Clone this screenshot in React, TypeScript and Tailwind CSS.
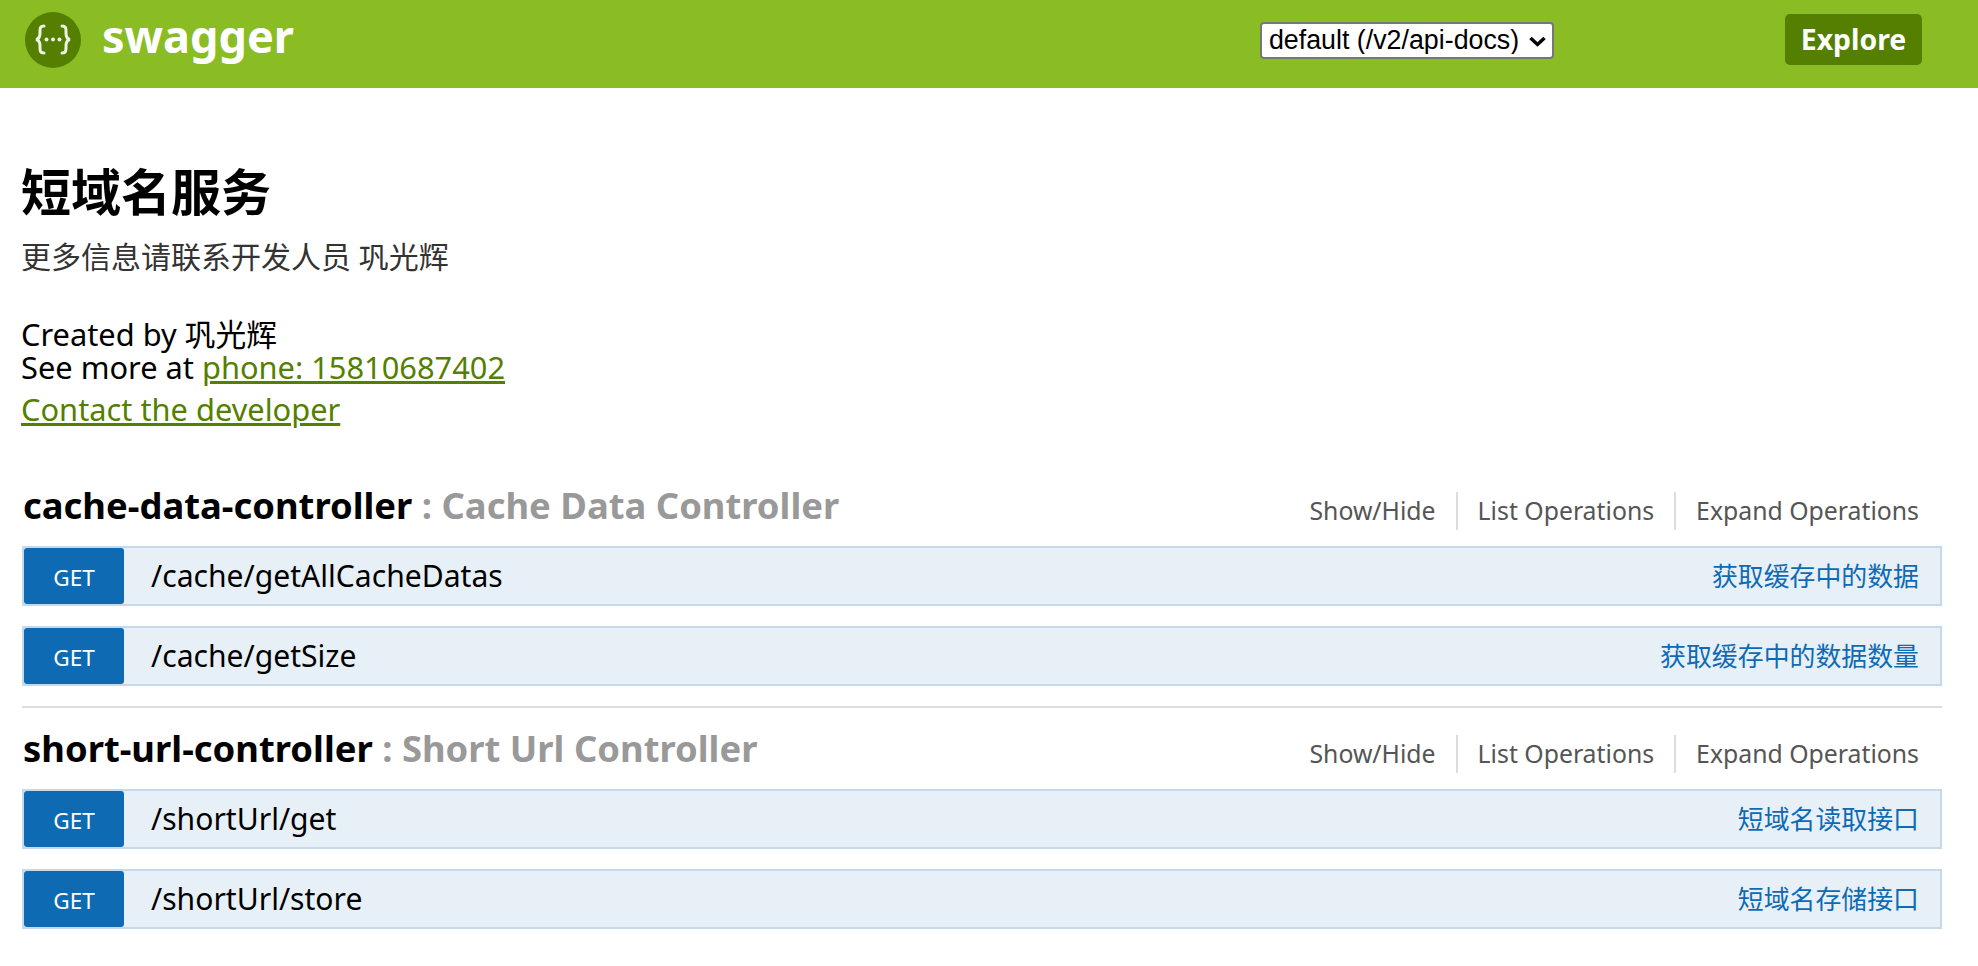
const F = '"Noto Sans", "Noto Sans CJK SC", sans-serif';

function Row({ path, desc }: { path: string; desc: string }) {
  return (
    <div className="flex h-[60px] items-center border-2 border-[#c3d9ec] bg-[#e7f0f7] pr-[21px]">
      <div className="flex h-[56px] w-[100px] items-center justify-center rounded-[3px] bg-[#0f6ab4] pt-1 text-[22.6px] text-white">GET</div>
      <div className="ml-[27px] flex-1 text-[30.1px] text-black">{path}</div>
      <div className="text-[25.9px] text-[#0f6ab4]">{desc}</div>
    </div>
  );
}

function Section({ name, label, rows, divider }: { name: string; label: string; rows: [string, string][]; divider?: boolean }) {
  return (
    <section className={divider ? "mb-[19px] border-b-2 border-[#ddd] pb-[20px]" : ""}>
      <div className="flex h-[62px] items-start justify-between pl-px pr-[23px]">
        <h2 className="text-[36.4px] leading-[42px] font-bold text-black">
          {name} <span className="text-[#999]">: {label}</span>
        </h2>
        <div className="mt-[11px] flex h-[32px] items-center text-[24.8px] text-[#555]">
          <span className="border-r-2 border-[#ddd] pr-[20px]">Show/Hide</span>
          <span className="border-r-2 border-[#ddd] px-[20px]">List Operations</span>
          <span className="pl-[20px]">Expand Operations</span>
        </div>
      </div>
      <div className="flex flex-col gap-[20px]">
        {rows.map(([p, d]) => (
          <Row key={p} path={p} desc={d} />
        ))}
      </div>
    </section>
  );
}

function Logo() {
  return (
    <svg className="mt-[12px] h-[56px] w-[56px] shrink-0" viewBox="0 0 56 56" fill="none">
      <circle cx="28" cy="28" r="28" fill="#547f00" />
      <g stroke="#eef3e4" strokeWidth="3" strokeLinecap="round">
        <path d="M19 14 C14.5 14 15 17 15 21 C15 25 14 27 11 27.5 C14 28 15 30 15 34 C15 38 14.5 41 19 41" />
        <path d="M37 14 C41.5 14 41 17 41 21 C41 25 42 27 45 27.5 C42 28 41 30 41 34 C41 38 41.5 41 37 41" />
      </g>
      <circle cx="21.5" cy="27.5" r="2" fill="#eef3e4" />
      <circle cx="28" cy="27.5" r="2" fill="#eef3e4" />
      <circle cx="34.5" cy="27.5" r="2" fill="#eef3e4" />
    </svg>
  );
}

export default function App() {
  return (
    <div className="min-h-[966px] bg-white" style={{ fontFamily: F }}>
      <header className="flex h-[88px] items-start bg-[#8abd24] pl-[25px] pr-[56px]">
        <Logo />
        <div className="mt-[13px] ml-[21px] text-[45px] leading-none font-bold text-white">swagger</div>
        <div className="relative mt-[22px] ml-[966px] h-[37px] w-[294px]">
          <select className="h-full w-full appearance-none rounded-[4px] border-2 border-[#767676] bg-white pl-[7px] text-[26.8px] leading-none text-black" style={{ fontFamily: '"Liberation Sans", sans-serif' }}>
            <option>default (/v2/api-docs)</option>
          </select>
          <svg className="absolute right-[8px] top-[14px] h-[11px] w-[17px]" viewBox="0 0 17 11" fill="none" stroke="#000" strokeWidth="3.4">
            <path d="M1.5 2 L8.5 8.5 L15.5 2" />
          </svg>
        </div>
        <button className="mt-[14px] ml-auto flex h-[51px] w-[137px] items-center justify-center rounded-[5px] bg-[#547f00] text-[28.4px] font-bold text-white">Explore</button>
      </header>
      <main className="px-[22px] pt-[74px] pr-[36px]">
        <div className="-ml-px">
          <h1 className="text-[50px] leading-[60px] font-bold text-black">短域名服务</h1>
          <p className="mt-[17px] text-[30px] leading-[36px] text-[#333]">更多信息请联系开发人员 巩光辉</p>
          <div className="mt-[40px] text-[30.8px] leading-[38px] text-black">
            <div className="h-[33px]">Created by 巩光辉</div>
            <div>
              See more at <a className="text-[#547f00] underline">phone: 15810687402</a>
            </div>
            <div className="mt-[4px]">
              <a className="text-[#547f00] underline">Contact the developer</a>
            </div>
          </div>
        </div>
        <div className="mt-[56px]">
          <Section
            divider
            name="cache-data-controller"
            label="Cache Data Controller"
            rows={[
              ["/cache/getAllCacheDatas", "获取缓存中的数据"],
              ["/cache/getSize", "获取缓存中的数据数量"],
            ]}
          />
          <Section
            name="short-url-controller"
            label="Short Url Controller"
            rows={[
              ["/shortUrl/get", "短域名读取接口"],
              ["/shortUrl/store", "短域名存储接口"],
            ]}
          />
        </div>
      </main>
    </div>
  );
}
